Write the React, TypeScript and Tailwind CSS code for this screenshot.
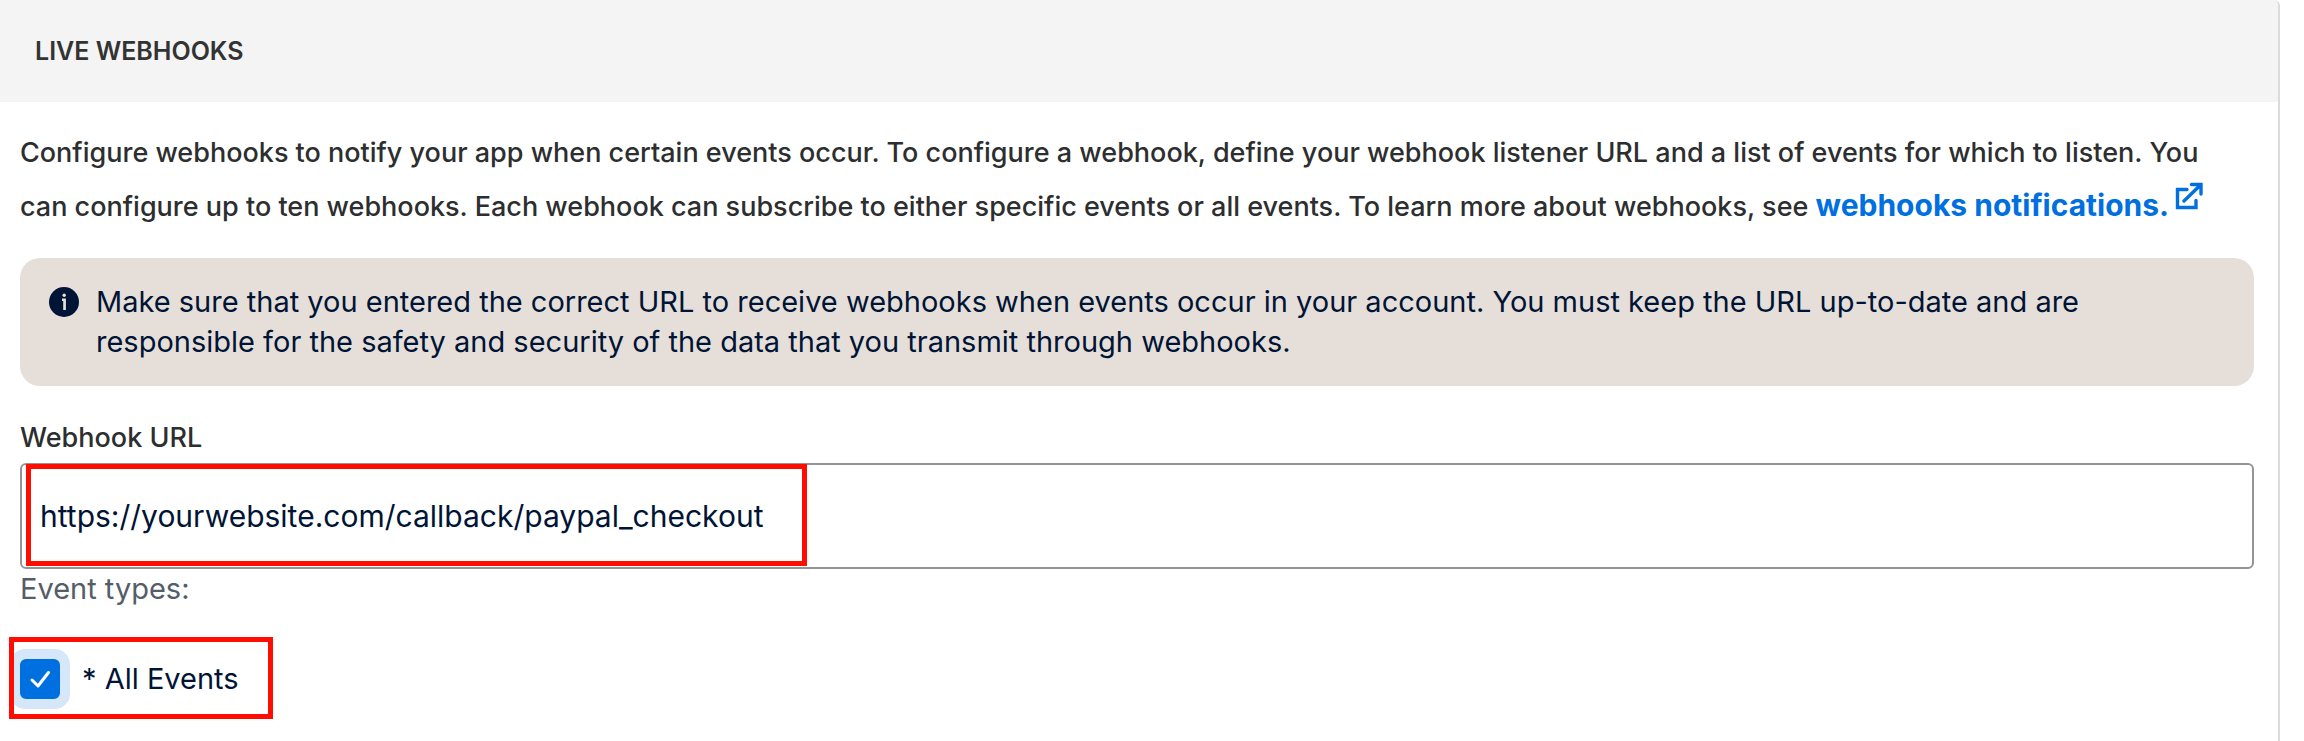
import {useState} from "react";

const InfoIcon = () => (
  <svg aria-hidden="true" className="mt-1 h-8 w-8 shrink-0" viewBox="0 0 32 32">
    <circle cx="16" cy="16" fill="#001435" r="15" />
    <circle cx="16.2" cy="9.2" fill="#e6dfd9" r="1.7" />
    <path d="M14 12.500h3.900V24h-2.700v-9H14z" fill="#e6dfd9" />
  </svg>
);

const ExternalIcon = () => (
  <svg
    aria-hidden="true"
    className="ml-1.5 inline-block h-7 w-7 align-[6px]"
    fill="none"
    stroke="#0070e0"
    strokeLinecap="round"
    strokeLinejoin="miter"
    strokeWidth="3.400"
    viewBox="0 0 28 28"
  >
    <path d="M12 7.500H2.500v18h18.500V18.500" />
    <path d="M16.500 2.500H26v9.500M26 2.500 9 19" />
  </svg>
);

export default function App() {
  const [url, setUrl] = useState("https://yourwebsite.com/callback/paypal_checkout");
  const [allEvents, setAllEvents] = useState(true);

  return (
    <main className="min-h-screen bg-white pr-6 font-['Inter',sans-serif] text-[29px] leading-10 text-[#2c2e2f]">
      <section className="min-h-screen overflow-hidden rounded-tr-md border-r-2 border-[#d9dbdc]">
        <h1 className="bg-[#f4f4f4] py-8 pl-[35px] text-[25px] leading-[38px] font-semibold text-[#333]">
          LIVE WEBHOOKS
        </h1>
        <div className="pt-6 pr-6 pl-5">
          <p className="pr-3 text-[27px] leading-[54px] font-medium">
            Configure webhooks to notify your app when certain events occur. To configure a webhook,
            define your webhook listener URL and a list of events for which to listen. You can
            configure up to ten webhooks. Each webhook can subscribe to either specific events or all
            events. To learn more about webhooks, see{" "}
            <a className="text-[30px] leading-none font-bold text-[#0070e0]" href="#notifications">
              webhooks notifications.
              <ExternalIcon />
            </a>
          </p>
          <div className="mt-6 flex gap-4 rounded-[20px] bg-[#e6dfd9] px-7 py-6 text-[#001435]">
            <InfoIcon />
            <p>
              Make sure that you entered the correct URL to receive webhooks when events occur in your
              account. You must keep the URL up-to-date and are responsible for the safety and security
              of the data that you transmit through webhooks.
            </p>
          </div>
          <label className="mt-8 block text-[27px] font-medium" htmlFor="url">
            Webhook URL
          </label>
          <div className="relative mt-[5px]">
            <input
              className="block h-[106px] w-full rounded-md border-2 border-[#929496] px-[18px] text-[30px] text-[#001435] outline-none"
              id="url"
              type="text"
              value={url}
              onChange={(e) => setUrl(e.target.value)}
            />
            <div className="pointer-events-none absolute top-px left-1.5 h-[102px] w-[781px] border-5 border-[#ff0d00]" />
          </div>
          <p className="text-[#545d68]">Event types:</p>
          <div className="relative mt-7 flex w-fit items-center gap-[22px] py-[22px]">
            <span className="relative h-10 w-10">
              <input
                checked={allEvents}
                className="peer block h-10 w-10 appearance-none rounded-md border-2 border-[#0070e0] ring-10 ring-[#d6e7fa] outline-none checked:bg-[#0070e0]"
                id="all"
                type="checkbox"
                onChange={(e) => setAllEvents(e.target.checked)}
              />
              <svg
                aria-hidden="true"
                className="pointer-events-none invisible absolute inset-0 h-10 w-10 peer-checked:visible"
                fill="none"
                stroke="white"
                strokeLinecap="round"
                strokeLinejoin="round"
                strokeWidth="3"
                viewBox="0 0 40 40"
              >
                <path d="m12 21 6 6 10.500-13.500" />
              </svg>
            </span>
            <label className="text-[#001435]" htmlFor="all">
              * All Events
            </label>
            <div className="pointer-events-none absolute top-0 -left-[11px] h-[82px] w-[264px] border-5 border-[#ff0d00]" />
          </div>
        </div>
      </section>
    </main>
  );
}
